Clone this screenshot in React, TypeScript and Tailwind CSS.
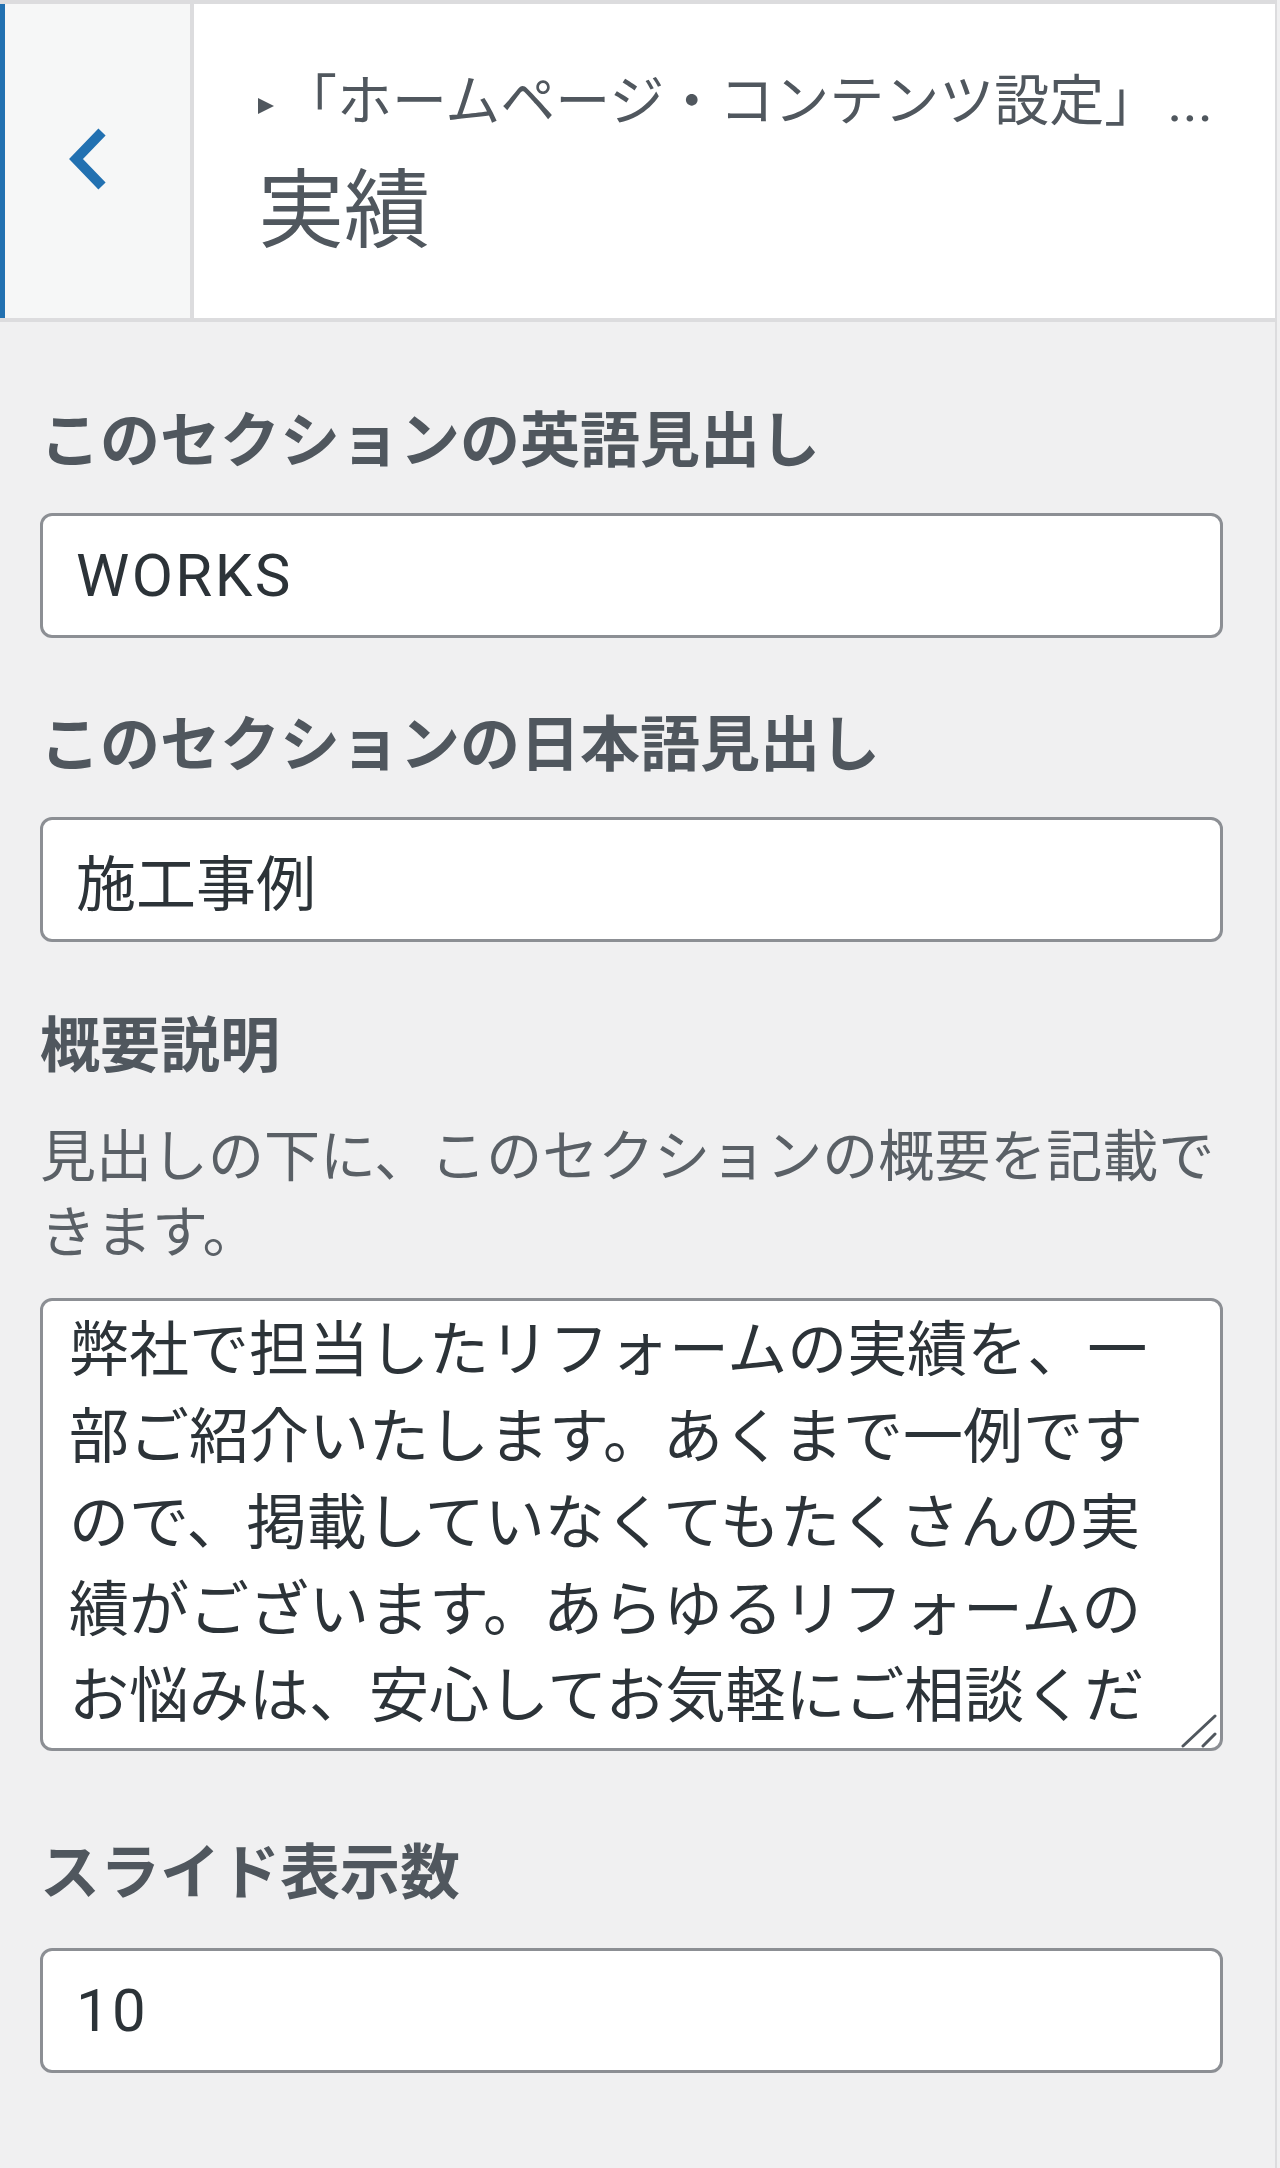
import { useState } from "react";

const description =
  "弊社で担当したリフォームの実績を、一部ご紹介いたします。あくまで一例ですので、掲載していなくてもたくさんの実績がございます。あらゆるリフォームのお悩みは、安心してお気軽にご相談ください。";

function TextField({ value, latin = false }: { value: string; latin?: boolean }) {
  const [text, setText] = useState(value);
  return (
    <input
      type="text"
      value={text}
      onChange={(e) => setText(e.target.value)}
      className={
        latin
          ? "block h-[125px] w-full rounded-[12px] border-[3px] border-[#8c8f94] bg-white px-[33px] text-[60px] tracking-[0.04em] text-[#2c3338] outline-none"
          : "block h-[125px] w-full rounded-[12px] border-[3px] border-[#8c8f94] bg-white px-[33px] text-[60px] text-[#2c3338] outline-none"
      }
    />
  );
}

export default function App() {
  const [body, setBody] = useState(description);

  return (
    <div className="min-h-[2168px] w-full bg-[#f0f0f1] font-[Roboto,'Noto_Sans_CJK_JP',sans-serif]">
      <div className="min-h-[2168px] w-[1277px] border-r-2 border-[#dcdcde]">
        {/* section header */}
        <div className="flex h-[322px] border-y-4 border-[#dcdcde] bg-white">
          <button
            type="button"
            aria-label="戻る"
            className="flex w-[194px] shrink-0 items-center border-l-[5px] border-r-4 border-l-[#2271b1] border-r-[#dcdcde] bg-[#f6f7f7] pl-[62px]"
          >
            <svg width="40" height="66" viewBox="0 0 40 66" className="-mt-[4px]">
              <path d="M35 6 L9 33 L35 60" fill="none" stroke="#2271b1" strokeWidth="10" strokeLinejoin="miter" />
            </svg>
          </button>
          <div className="flex min-w-0 flex-col pl-[64px] pt-[58px] text-[#50575e]">
            <div className="flex items-center whitespace-nowrap text-[55px] leading-[78px]">
              <svg width="16" height="16" viewBox="0 0 16 16" className="mt-[9px] shrink-0">
                <polygon points="0,0 16,8 0,16" fill="#50575e" />
              </svg>
              <span className="ml-[8px]">「ホームページ・コンテンツ設定」</span>
              <span className="ml-[8px] text-[58px]">...</span>
            </div>
            <h3 className="mt-[20px] text-[86px] leading-[104px]">実績</h3>
          </div>
        </div>

        {/* controls */}
        <div className="pl-[40px] pr-[52px] pt-[78px] text-[#50575e]">
          <label className="block text-[60px] font-bold leading-[84px]">このセクションの英語見出し</label>
          <div className="mt-[29px]">
            <TextField value="WORKS" latin />
          </div>

          <label className="mt-[66px] block text-[60px] font-bold leading-[84px]">このセクションの日本語見出し</label>
          <div className="mt-[29px]">
            <TextField value="施工事例" />
          </div>

          <label className="mt-[63px] block text-[60px] font-bold leading-[84px]">概要説明</label>
          <p className="mt-[30px] text-[56px] leading-[76px] text-[#5a6066]">
            見出しの下に、このセクションの概要を記載できます。
          </p>
          <div className="relative mt-[27px]">
            <textarea
              value={body}
              onChange={(e) => setBody(e.target.value)}
              className="block h-[453px] w-full resize-none overflow-hidden rounded-[12px] border-[3px] border-[#8c8f94] bg-white px-[26px] pt-[7px] text-[60px] leading-[86.5px] text-[#2c3338] outline-none"
            />
            <svg width="36" height="34" viewBox="0 0 36 34" className="pointer-events-none absolute bottom-[3px] right-[6px]">
              <path d="M2 32 L34 2 M22 32 L34 20" stroke="#50575e" strokeWidth="3" strokeLinecap="round" />
            </svg>
          </div>

          <label className="mt-[81px] block text-[60px] font-bold leading-[84px]">スライド表示数</label>
          <div className="mt-[32px]">
            <TextField value="10" latin />
          </div>
        </div>
      </div>
    </div>
  );
}
